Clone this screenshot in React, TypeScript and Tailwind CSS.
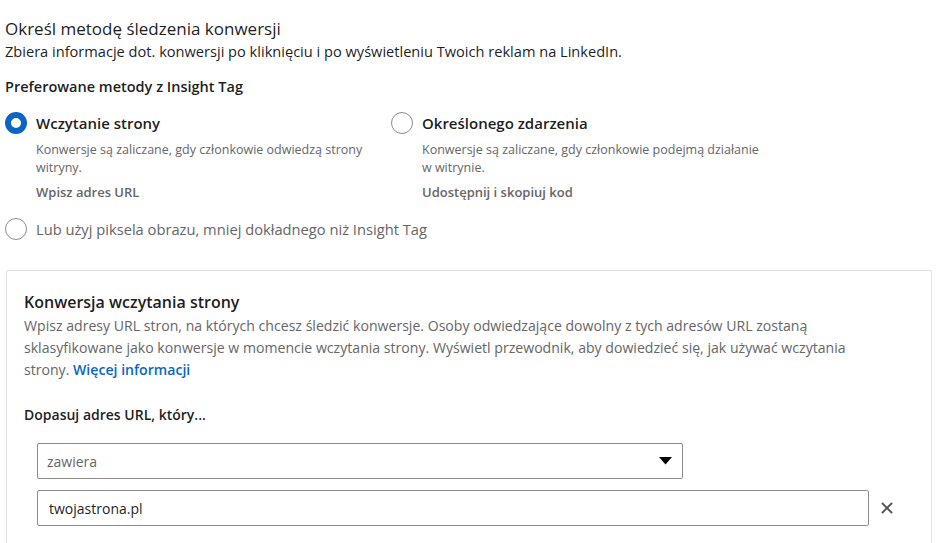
import { X } from "lucide-react";

function Radio({ checked }: { checked?: boolean }) {
  if (checked) {
    return <span className="h-[22px] w-[22px] shrink-0 rounded-full border-[6px] border-[#0a66c2] bg-white" />;
  }
  return <span className="h-[22px] w-[22px] shrink-0 rounded-full border-[1.5px] border-[#8c8c8c] bg-white" />;
}

function Method({ title, desc, action, checked }: { title: string; desc: string; action: string; checked?: boolean }) {
  return (
    <div className="w-[386px]">
      <div className="flex items-center gap-[9px]">
        <Radio checked={checked} />
        <span className="text-[15px] font-semibold text-[#000000e6]">{title}</span>
      </div>
      <p className="mt-[6px] w-[376px] pl-[31px] text-[12.5px] leading-[18px] text-[#666]">{desc}</p>
      <p className="mt-[6px] pl-[31px] text-[13px] font-semibold text-[#666]">{action}</p>
    </div>
  );
}

export default function App() {
  return (
    <div className="min-h-screen bg-white pl-[5px] pt-[18px] font-['Open_Sans',sans-serif] text-[#000000e6]">
      <h1 className="text-[17px] leading-[22px]">Określ metodę śledzenia konwersji</h1>
      <p className="mt-[1px] text-[14.6px] leading-[20px]">
        Zbiera informacje dot. konwersji po kliknięciu i po wyświetleniu Twoich reklam na LinkedIn.
      </p>

      <h2 className="mt-[16px] text-[14.5px] font-semibold leading-[20px]">Preferowane metody z Insight Tag</h2>

      <div className="mt-[15px] flex">
        <Method
          checked
          title="Wczytanie strony"
          desc="Konwersje są zaliczane, gdy członkowie odwiedzą strony witryny."
          action="Wpisz adres URL"
        />
        <Method
          title="Określonego zdarzenia"
          desc="Konwersje są zaliczane, gdy członkowie podejmą działanie w witrynie."
          action="Udostępnij i skopiuj kod"
        />
      </div>

      <div className="mt-[16px] flex items-center gap-[9px]">
        <Radio />
        <span className="text-[14.7px] text-[#666]">Lub użyj piksela obrazu, mniej dokładnego niż Insight Tag</span>
      </div>

      <div className="mt-[30px] ml-px mr-[9px] rounded-t-[3px] border border-b-0 border-[#e0e0e0] pl-[17px] pr-[20px] pt-[20px] pb-[20px]">
        <h3 className="text-[16px] font-semibold leading-[22px]">Konwersja wczytania strony</h3>
        <p className="mt-[2px] pr-[40px] text-[14.1px] leading-[22px] text-[#666]">
          Wpisz adresy URL stron, na których chcesz śledzić konwersje. Osoby odwiedzające dowolny z tych adresów URL
          zostaną sklasyfikowane jako konwersje w momencie wczytania strony. Wyświetl przewodnik, aby dowiedzieć się, jak
          używać wczytania strony. <a className="font-semibold text-[#0a66c2]">Więcej informacji</a>
        </p>

        <p className="mt-[23px] text-[14px] font-semibold leading-[22px]">Dopasuj adres URL, który...</p>

        <div className="mt-[17px] ml-[13px] flex h-[36px] w-[646px] items-center justify-between rounded-[2px] border border-[#8c8c8c] pl-[9px] pr-[10px]">
          <span className="text-[14px] text-[#666]">zawiera</span>
          <svg width="13" height="8" viewBox="0 0 13 8">
            <path d="M0 0h13L6.5 7.5z" fill="#000" />
          </svg>
        </div>

        <div className="mt-[11px] ml-[13px] flex items-center gap-[9px]">
          <div className="flex h-[36px] w-[832px] shrink-0 items-center rounded-[2px] border border-[#8c8c8c] pl-[11px]">
            <span className="text-[14px] text-[#000000e6]">twojastrona.pl</span>
          </div>
          <X className="h-[18px] w-[18px] text-[#555]" strokeWidth={2.5} />
        </div>
      </div>
    </div>
  );
}
